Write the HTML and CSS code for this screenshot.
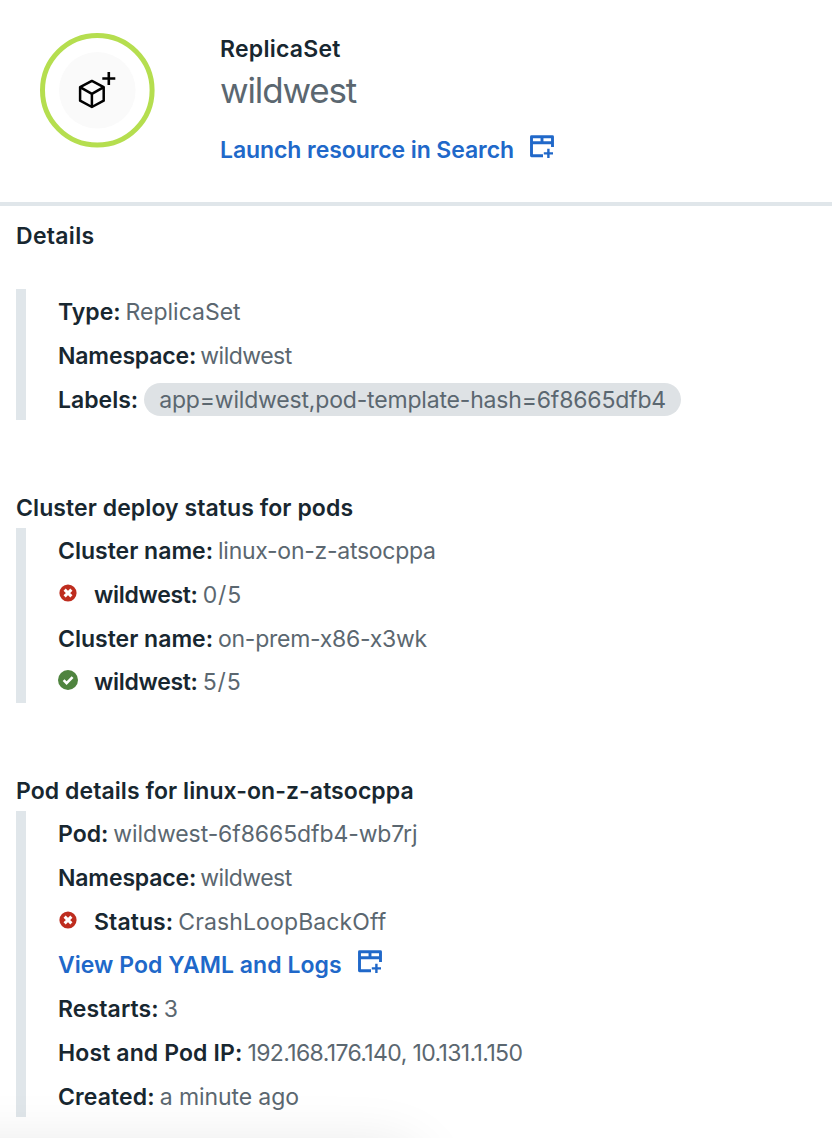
FILE: index.html
```
<!DOCTYPE html>
<html lang="en">
<head>
<meta charset="utf-8">
<title>ReplicaSet wildwest</title>
<link rel="stylesheet" href="styles.css">
</head>
<body>
<svg class="defs" width="0" height="0" aria-hidden="true">
  <symbol id="launch" viewBox="0 0 26 26">
    <path d="M14 21.7H2.5V2.8H23.5V13M2.5 8.8H23.5M13 2.8V8.8" fill="none" stroke="currentColor" stroke-width="2.9" stroke-linejoin="round"/>
    <path d="M19.4 14.8V24M14.8 19.4H24" fill="none" stroke="currentColor" stroke-width="2.4"/>
  </symbol>
  <symbol id="failed" viewBox="0 0 20 20">
    <circle cx="10" cy="10" r="8.6" fill="#be2d1f"/>
    <path d="M6.6 6.6l6.8 6.8M13.4 6.6l-6.8 6.8" stroke="#fff" stroke-width="3"/>
  </symbol>
  <symbol id="ready" viewBox="0 0 20 20">
    <circle cx="10" cy="10" r="10" fill="#4f843f"/>
    <path d="M5.6 10.2l3 3 6-6" fill="none" stroke="#fff" stroke-width="2.6"/>
  </symbol>
</svg>
<main class="panel">
  <header class="header">
    <svg class="resource" viewBox="0 0 116 116" aria-hidden="true">
      <circle cx="58.3" cy="58.3" r="54.8" fill="#fff" stroke="#b5de4f" stroke-width="5"/>
      <circle cx="58.3" cy="58.3" r="38.3" fill="#fafafa"/>
      <path d="M52.9 48.9L64.7 55.1V68.7L52.9 75L41.1 68.7V55.1ZM41.1 55.1L52.9 61.9L64.7 55.1M52.9 61.9V75" fill="none" stroke="#000" stroke-width="2.5" stroke-linejoin="round"/>
      <path d="M69.8 40V53M63.3 46.5H76.3" stroke="#000" stroke-width="2.6"/>
    </svg>
    <div class="heading">
      <div class="kind">ReplicaSet</div>
      <h1 class="name">wildwest</h1>
      <a class="link link-search"><span>Launch resource in Search</span><svg class="launch"><use href="#launch"/></svg></a>
    </div>
  </header>
  <section class="section">
    <h2 class="title title-details">Details</h2>
    <div class="group">
      <div class="row"><b class="key">Type:</b><span class="value">ReplicaSet</span></div>
      <div class="row"><b class="key key-namespace">Namespace:</b><span class="value namespace">wildwest</span></div>
      <div class="row"><b class="key">Labels:</b><span class="pill">app=wildwest,pod-template-hash=6f8665dfb4</span></div>
    </div>
  </section>
  <section class="section section-next">
    <h2 class="title">Cluster deploy status for pods</h2>
    <div class="group">
      <div class="row"><b class="key">Cluster name:</b><span class="value cluster">linux-on-z-atsocppa</span></div>
      <div class="row"><svg class="status"><use href="#failed"/></svg><b class="key key-app">wildwest:</b><span class="value count">0/5</span></div>
      <div class="row"><b class="key">Cluster name:</b><span class="value cluster">on-prem-x86-x3wk</span></div>
      <div class="row"><svg class="status"><use href="#ready"/></svg><b class="key key-app">wildwest:</b><span class="value count">5/5</span></div>
    </div>
  </section>
  <section class="section section-next">
    <h2 class="title title-pod">Pod details for linux-on-z-atsocppa</h2>
    <div class="group">
      <div class="row"><b class="key">Pod:</b><span class="value pod">wildwest-6f8665dfb4-wb7rj</span></div>
      <div class="row"><b class="key key-namespace">Namespace:</b><span class="value namespace">wildwest</span></div>
      <div class="row"><svg class="status"><use href="#failed"/></svg><b class="key key-status">Status:</b><span class="value state">CrashLoopBackOff</span></div>
      <div class="row"><a class="link link-logs"><span>View Pod YAML and Logs</span><svg class="launch"><use href="#launch"/></svg></a></div>
      <div class="row"><b class="key key-restarts">Restarts:</b><span class="value">3</span></div>
      <div class="row"><b class="key key-ip">Host and Pod IP:</b><span class="value ip">192.168.176.140, 10.131.1.150</span></div>
      <div class="row"><b class="key key-created">Created:</b><span class="value created">a minute ago</span></div>
    </div>
  </section>
  <div class="shade"></div>
</main>
</body>
</html>
```
FILE: styles.css
```
* { box-sizing: border-box; }
body { margin: 0; background: #fff; color: #182730; font: 23px/34px Inter, "Open Sans", sans-serif; }
.defs { position: absolute; }
.panel { position: relative; width: 832px; height: 1138px; overflow: hidden; }
.header { display: flex; height: 206px; padding: 32px 0 0 39px; border-bottom: 4px solid #e0e6ea; }
.resource { flex: none; width: 116px; height: 116px; }
.heading { padding-left: 65px; }
.kind { font-weight: 600; letter-spacing: .25px; }
.name { margin: 0; color: #5b6770; font-size: 35px; font-weight: 400; line-height: 48px; letter-spacing: -1.15px; }
.link { display: flex; align-items: center; color: #2068c9; font-weight: 600; white-space: nowrap; }
.link-search { margin-top: 19px; letter-spacing: -.08px; }
.link-logs { letter-spacing: .04px; }
.launch { flex: none; width: 26px; height: 26px; margin: -6px 0 0 15px; }
.section { padding: 0 16px; }
.title { margin: 0; font-size: 23px; font-weight: 600; line-height: 34px; letter-spacing: .08px; }
.title-details { padding: 13px 0 36px; letter-spacing: .3px; }
.title-pod { letter-spacing: .07px; }
.group { padding-left: 32px; border-left: 10px solid #e0e6ea; }
.section-next { padding-top: 71px; }
.section-next .title { padding-bottom: 3px; }
.row { display: flex; align-items: center; height: 43.72px; padding-top: 2.6px; white-space: nowrap; }
.key { font-weight: 600; }
.key-namespace { letter-spacing: -.15px; }
.key-app { letter-spacing: -.3px; }
.key-status { letter-spacing: .1px; }
.key-restarts { letter-spacing: .1px; }
.key-ip { letter-spacing: .12px; }
.key-created { letter-spacing: .12px; }
.value { margin-left: 5px; color: #5b6770; }
.namespace { margin-left: 4px; letter-spacing: -.5px; }
.cluster { letter-spacing: -.27px; }
.count { letter-spacing: .9px; }
.pod { letter-spacing: -.1px; }
.state { letter-spacing: .12px; }
.ip { letter-spacing: -.62px; }
.created { letter-spacing: -.1px; }
.pill { height: 33px; margin: -1px 0 0 6px; padding: 0 15px; border-radius: 17px; background: #dee2e5; color: #5b6770; line-height: 34px; letter-spacing: -.18px; }
.status { flex: none; width: 20px; height: 20px; margin: -4px 16px 0 0; }
.shade { position: absolute; left: -200px; bottom: -120px; width: 620px; height: 110px; border-radius: 30px; box-shadow: 0 0 60px rgba(0, 0, 0, .11); }
```
